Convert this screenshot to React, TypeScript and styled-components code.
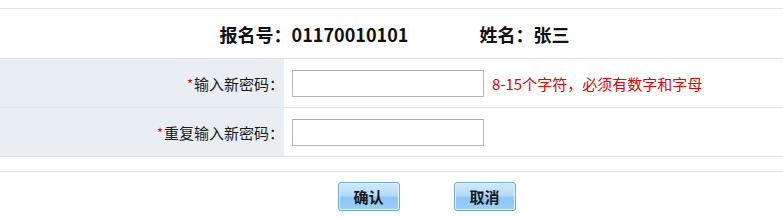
import React from 'react';
import styled, { createGlobalStyle } from 'styled-components';

const GlobalStyle = createGlobalStyle`
	body {
		margin: 0;
		background: #ffffff;
		font-family: "Liberation Sans", "Noto Sans CJK SC", sans-serif;
		font-size: 12px;
		color: #333;
	}
`;

type FieldProps = {
	label: string;
	hint?: string;
};

const Field: React.FC<FieldProps> = ({ label, hint }) => (
	<Row>
		<LabelCell>
			<Star>*</Star>
			{label}：
		</LabelCell>
		<InputCell>
			<PwdInput type="password" />
			{hint && <Hint>{hint}</Hint>}
		</InputCell>
	</Row>
);

export default function App() {
	return (
		<Page>
			<GlobalStyle />
			<FormTable>
				<Header>
					<HeaderItem>报名号：01170010101</HeaderItem>
					<HeaderItem>姓名：张三</HeaderItem>
				</Header>
				<Field label="输入新密码" hint="8-15个字符，必须有数字和字母" />
				<Field label="重复输入新密码" />
			</FormTable>
			<ButtonBar>
				<BlueButton>确认</BlueButton>
				<BlueButton>取消</BlueButton>
			</ButtonBar>
		</Page>
	);
}

const Page = styled.div`
	width: 783px;
	padding-top: 8px;
`;

const FormTable = styled.div`
	border-top: 1px solid #e6e2de;
	border-bottom: 1px solid #e6e2de;
`;

const Header = styled.div`
	display: flex;
	justify-content: center;
	align-items: center;
	gap: 71px;
	height: 49px;
	padding-left: 6px;
	border-bottom: 1px solid #e6e2de;
`;

const HeaderItem = styled.span`
	font-family: "Noto Sans CJK SC", sans-serif;
	font-size: 18px;
	font-weight: bold;
	color: #111;
`;

const Row = styled.div`
	display: grid;
	grid-template-columns: 285px 1fr;
	height: 48px;

	& + & {
		border-top: 1px solid #e6e2de;
	}
`;

const LabelCell = styled.div`
	display: flex;
	align-items: center;
	justify-content: flex-end;
	padding-right: 0;
	background: #e9eef3;
	border-right: 1px solid #ffffff;
	font-family: "Noto Sans CJK SC", sans-serif;
	font-size: 15px;
	color: #1a1a1a;
`;

const Star = styled.span`
	color: #e60000;
	font-size: 13px;
	margin-right: 1px;
`;

const InputCell = styled.div`
	display: flex;
	align-items: center;
	padding-left: 7px;
	gap: 8px;
`;

const PwdInput = styled.input`
	box-sizing: border-box;
	width: 192px;
	height: 27px;
	margin: 0;
	border: 1px solid #b9b9b9;
	border-top-color: #a8a8a8;
	background: #fff;
	outline: none;
`;

const Hint = styled.span`
	font-family: "Noto Sans CJK SC", sans-serif;
	font-size: 15px;
	color: #e60000;
`;

const ButtonBar = styled.div`
	display: flex;
	justify-content: center;
	gap: 54px;
	margin-top: 14px;
	padding-top: 10px;
	padding-left: 70px;
	border-top: 1px solid #e6e2de;
`;

const BlueButton = styled.button`
	width: 62px;
	height: 29px;
	padding: 0;
	border: 1px solid #6fa8dc;
	border-radius: 3px;
	box-shadow: inset 0 0 0 1px #e4f2fd;
	background: linear-gradient(#d2eafc 0%, #b4dbfa 45%, #8cc7f6 55%, #9ccff8 100%);
	font-family: "Noto Sans CJK SC", sans-serif;
	font-size: 15px;
	font-weight: bold;
	color: #1a1a1a;
	cursor: pointer;
`;
